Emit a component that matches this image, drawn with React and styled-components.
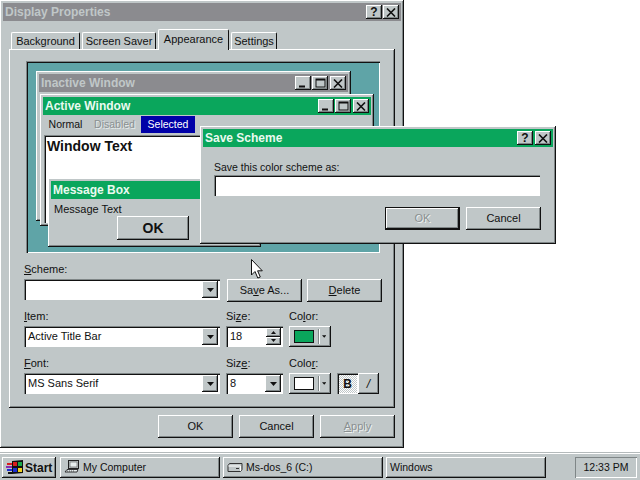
import styled, { createGlobalStyle, css } from "styled-components";

const FACE = "#c0c7c8";
const GREEN = "#0aa65c";

const raised = css`
  box-shadow: inset -1px -1px 0 #111, inset 1px 1px 0 #fff, inset -2px -2px 0 #7f8687;
`;

const sunken = css`
  box-shadow: inset 1px 1px 0 #7f8687, inset 2px 2px 0 #111, inset -1px -1px 0 #fff;
`;

const GlobalStyle = createGlobalStyle`
  html, body {
    margin: 0;
    background: #fff;
  }
  body {
    font-family: "Liberation Sans", Arial, sans-serif;
    font-size: 11px;
    color: #111;
  }
  u {
    text-underline-offset: 1px;
  }
`;

const Desktop = styled.div`
  position: relative;
  width: 640px;
  height: 480px;
  overflow: hidden;
  display: flex;
  flex-direction: column;
  justify-content: space-between;
  background: #fff;
`;

const Window = styled.div`
  box-sizing: border-box;
  width: ${(p) => p.$w}px;
  height: ${(p) => p.$h}px;
  padding: 3px;
  background: ${FACE};
  display: flex;
  flex-direction: column;
  box-shadow: inset -1px -1px 0 #111, inset 1px 1px 0 #fff, inset -2px -2px 0 #7f8687;
`;

const DialogWindow = styled(Window)`
  position: absolute;
  left: 200px;
  top: 126px;
  z-index: 5;
`;

const PreviewWindow = styled(Window)`
  position: absolute;
  left: ${(p) => p.$x}px;
  top: ${(p) => p.$y}px;
`;

const TitleBar = styled.div`
  flex: none;
  height: 18px;
  padding: 0 2px;
  display: flex;
  align-items: center;
  justify-content: space-between;
  background: ${(p) => (p.$active ? GREEN : "#8b8b8f")};
  color: ${(p) => (p.$active ? "#eafaf0" : FACE)};
  font-size: 12px;
  font-weight: bold;
`;

const TitleButtons = styled.div`
  display: flex;
  align-items: center;
  gap: ${(p) => p.$gap ?? 1}px;
`;

const TitleButton = styled.div`
  width: 16px;
  height: 14px;
  margin-left: ${(p) => p.$ml ?? 0}px;
  background: ${FACE};
  color: #111;
  display: flex;
  align-items: center;
  justify-content: center;
  font-size: 12px;
  font-weight: bold;
  ${raised}
`;

const CloseIcon = () => (
  <svg width="10" height="9" viewBox="0 0 10 9">
    <path d="M1 0.5 L9 8.5 M9 0.5 L1 8.5" stroke="#111" strokeWidth="1.6" />
  </svg>
);

const MinIcon = () => (
  <svg width="10" height="10" viewBox="0 0 10 10">
    <rect x="1" y="7.5" width="6" height="2" fill="#111" />
  </svg>
);

const MaxIcon = () => (
  <svg width="11" height="10" viewBox="0 0 11 10">
    <rect x="1" y="1" width="9" height="8" fill="none" stroke="#111" strokeWidth="1" />
    <rect x="1" y="1" width="9" height="1.5" fill="#111" />
  </svg>
);

const TabStrip = styled.div`
  flex: none;
  height: 20px;
  margin-top: 8px;
  padding-left: 8px;
  display: flex;
  align-items: flex-end;
  gap: 2px;
  position: relative;
  z-index: 1;
`;

const Tab = styled.div`
  box-sizing: border-box;
  width: ${(p) => p.$w}px;
  height: ${(p) => (p.$active ? 21 : 17)}px;
  margin-bottom: ${(p) => (p.$active ? -1 : 0)}px;
  padding-top: ${(p) => (p.$active ? 2 : 1)}px;
  background: ${FACE};
  text-align: center;
  white-space: nowrap;
  line-height: 15px;
  border-top: 1px solid #fff;
  border-left: 1px solid #fff;
  border-right: 1px solid #111;
  border-radius: 2px 2px 0 0;
`;

const TabPanel = styled.div`
  box-sizing: border-box;
  width: 386px;
  height: 359px;
  margin-left: 6px;
  padding: 12px 0 0 15px;
  ${raised}
`;

const Preview = styled.div`
  position: relative;
  width: 354px;
  height: 192px;
  margin-left: 2px;
  margin-bottom: 11px;
  background: #5fa4a7;
  box-shadow: inset 1px 1px 0 #7f8687, inset 2px 2px 0 #111, inset -1px -1px 0 #fff;
`;

const MenuRow = styled.div`
  flex: none;
  height: 19px;
  display: flex;
  align-items: center;
  font-size: 10.5px;
`;

const MenuItem = styled.span`
  box-sizing: border-box;
  width: ${(p) => p.$w}px;
  height: 17px;
  line-height: 16px;
  text-align: center;
  ${(p) =>
    p.$disabled &&
    css`
      color: #8a9091;
      text-shadow: 1px 1px 0 #e6ecec;
    `}
  ${(p) =>
    p.$selected &&
    css`
      background: #0000a8;
      color: #fff;
    `}
`;

const WindowTextBox = styled.div`
  flex: 1;
  margin: 1px 0 0 1px;
  padding: 3px 3px;
  background: #fff;
  font-size: 14px;
  font-weight: bold;
  color: #111;
  ${sunken}
`;

const MessageBody = styled.div`
  flex: 1;
  display: flex;
  flex-direction: column;
  padding: 4px 0 0 3px;
`;

const BigButton = styled.div`
  box-sizing: border-box;
  width: 72px;
  height: 24px;
  margin: 1px 0 0 63px;
  display: flex;
  align-items: center;
  justify-content: center;
  font-size: 14px;
  font-weight: bold;
  ${raised}
`;

const DialogBody = styled.div`
  flex: 1;
  display: flex;
  flex-direction: column;
  padding: 15px 12px 0 11px;
`;

const Label = styled.div`
  height: 13px;
  margin-bottom: ${(p) => p.$mb ?? 2}px;
  font-size: ${(p) => p.$size ?? 11}px;
  line-height: 11px;
`;

const TextInput = styled.div`
  width: 326px;
  height: 21px;
  background: #fff;
  ${sunken}
`;

const ButtonRow = styled.div`
  display: flex;
  justify-content: flex-end;
  gap: ${(p) => p.$gap ?? 6}px;
  margin-top: ${(p) => p.$mt ?? 0}px;
  margin-right: ${(p) => p.$mr ?? 0}px;
`;

const Button = styled.div`
  box-sizing: border-box;
  width: 75px;
  height: 23px;
  padding-bottom: 2px;
  display: flex;
  align-items: center;
  justify-content: center;
  ${raised}
  ${(p) =>
    p.$disabled &&
    css`
      color: #8a9091;
      text-shadow: 1px 1px 0 #eef2f2;
    `}
  ${(p) =>
    p.$default &&
    css`
      box-shadow: inset 0 0 0 1px #111, inset -2px -2px 0 #111, inset 2px 2px 0 #fff, inset -3px -3px 0 #7f8687;
    `}
`;

const FormRow = styled.div`
  display: flex;
  align-items: flex-start;
  gap: 6px;
  margin-bottom: ${(p) => p.$mb ?? 0}px;
`;

const Field = styled.div`
  width: ${(p) => p.$w}px;
`;

const ComboBox = styled.div`
  box-sizing: border-box;
  width: ${(p) => p.$w}px;
  height: 21px;
  padding: 2px 2px 2px 4px;
  background: #fff;
  display: flex;
  align-items: center;
  justify-content: space-between;
  ${sunken}
`;

const ComboText = styled.span`
  margin-bottom: 2px;
`;

const DropButton = styled.div`
  flex: none;
  width: 16px;
  height: 17px;
  background: ${FACE};
  display: flex;
  align-items: center;
  justify-content: center;
  ${raised}
`;

const DownArrow = ({ w = 7 }) => (
  <svg width={w} height={Math.ceil(w / 2)} viewBox={`0 0 ${w} ${Math.ceil(w / 2)}`}>
    <path d={`M0 0 H${w} L${w / 2} ${Math.ceil(w / 2)} Z`} fill="#111" />
  </svg>
);

const Spinner = styled.div`
  flex: none;
  width: 15px;
  height: 17px;
  display: flex;
  flex-direction: column;
`;

const SpinPart = styled.div`
  flex: 1;
  background: ${FACE};
  display: flex;
  align-items: center;
  justify-content: center;
  ${raised}
  svg {
    transform: ${(p) => (p.$up ? "rotate(180deg)" : "none")};
  }
`;

const ColorButton = styled.div`
  box-sizing: border-box;
  width: 42px;
  height: 21px;
  padding: 4px 5px 4px 5px;
  display: flex;
  align-items: center;
  ${raised}
`;

const Swatch = styled.div`
  box-sizing: border-box;
  width: 22px;
  height: 13px;
  background: ${(p) => p.$color};
  border: 1px solid #111;
`;

const ColorDivider = styled.div`
  width: 1px;
  height: 15px;
  margin: 0 3px 0 4px;
  background: #7f8687;
  box-shadow: 1px 0 0 #fff;
`;

const StyleToggles = styled.div`
  display: flex;
`;

const StyleButton = styled.div`
  box-sizing: border-box;
  width: 21px;
  height: 21px;
  display: flex;
  align-items: center;
  justify-content: center;
  font-size: 12px;
  font-weight: ${(p) => (p.$italic ? "normal" : "bold")};
  font-style: ${(p) => (p.$italic ? "italic" : "normal")};
  ${(p) =>
    p.$pressed
      ? css`
          background: repeating-conic-gradient(#fff 0 25%, ${FACE} 0 50%) 0 0 / 2px 2px;
          ${sunken}
        `
      : raised}
`;

const Taskbar = styled.div`
  flex: none;
  box-sizing: border-box;
  height: 28px;
  padding: 4px 3px 3px 2px;
  display: flex;
  align-items: flex-start;
  background: ${FACE};
  border-top: 1px solid #b4babb;
  box-shadow: inset 0 1px 0 #fff;
`;

const StartButton = styled.div`
  box-sizing: border-box;
  width: 54px;
  height: 21px;
  margin-right: 4px;
  padding-left: 4px;
  display: flex;
  align-items: center;
  gap: 1px;
  font-size: 12px;
  font-weight: bold;
  ${raised}
`;

const TaskButton = styled.div`
  box-sizing: border-box;
  width: 160px;
  height: 21px;
  margin-right: 3px;
  padding: 0 0 1px 4px;
  display: flex;
  align-items: center;
  gap: 3px;
  font-size: 10.5px;
  ${raised}
`;

const Clock = styled.div`
  box-sizing: border-box;
  width: 62px;
  height: 21px;
  margin-left: auto;
  padding-bottom: 1px;
  display: flex;
  align-items: center;
  justify-content: center;
  font-size: 10.5px;
  box-shadow: inset 1px 1px 0 #7f8687, inset -1px -1px 0 #fff;
`;

const Cursor = styled.svg`
  position: absolute;
  left: 251px;
  top: 259px;
  z-index: 10;
`;

const FlagIcon = () => (
  <svg width="18" height="17" viewBox="0 0 18 17">
    <path d="M6 2 L17 1 L17 14 L6 15 Z" fill="#111" />
    <rect x="7" y="3" width="4" height="4" fill="#d81e1e" />
    <rect x="12" y="3" width="4" height="4" fill="#17a84a" />
    <rect x="7" y="9" width="4" height="4" fill="#1c2fd0" />
    <rect x="12" y="9" width="4" height="4" fill="#f2d21e" />
    <rect x="1" y="4" width="5" height="2" fill="#d81e1e" />
    <rect x="0" y="7" width="6" height="2" fill="#8a2bb0" />
    <rect x="1" y="10" width="5" height="2" fill="#1c2fd0" />
    <rect x="2" y="13" width="4" height="2" fill="#111" />
  </svg>
);

const ComputerIcon = () => (
  <svg width="16" height="16" viewBox="0 0 16 16">
    <rect x="4.5" y="1.5" width="10" height="8" fill={FACE} stroke="#222" />
    <rect x="6" y="3" width="7" height="5" fill="#e8eeee" stroke="#555" strokeWidth="0.6" />
    <path d="M3 10.5 H14 L13 13 H1 Z" fill="#e8eeee" stroke="#222" strokeWidth="0.9" />
    <path d="M3 12 H11" stroke="#333" strokeWidth="0.8" strokeDasharray="1 1" />
  </svg>
);

const DriveIcon = () => (
  <svg width="16" height="12" viewBox="0 0 16 12">
    <path d="M2.5 2.5 H15 V8.5 L13.5 10.5 H1 V4.5 Z" fill={FACE} stroke="#333" />
    <path d="M1.5 5 H13.5 V10" fill="none" stroke="#fff" />
    <path d="M9 7.5 H12" stroke="#333" />
  </svg>
);

const App = () => (
  <Desktop>
    <GlobalStyle />
    <Window $w={404} $h={448}>
      <TitleBar>
        <span>Display Properties</span>
        <TitleButtons>
          <TitleButton>?</TitleButton>
          <TitleButton>
            <CloseIcon />
          </TitleButton>
        </TitleButtons>
      </TitleBar>
      <TabStrip>
        <Tab $w={69}>Background</Tab>
        <Tab $w={74}>Screen Saver</Tab>
        <Tab $w={71} $active>
          Appearance
        </Tab>
        <Tab $w={46}>Settings</Tab>
      </TabStrip>
      <TabPanel>
        <Preview>
          <PreviewWindow $x={10} $y={10} $w={315} $h={150}>
            <TitleBar>
              <span>Inactive Window</span>
              <TitleButtons>
                <TitleButton>
                  <MinIcon />
                </TitleButton>
                <TitleButton>
                  <MaxIcon />
                </TitleButton>
                <TitleButton $ml={1}>
                  <CloseIcon />
                </TitleButton>
              </TitleButtons>
            </TitleBar>
          </PreviewWindow>
          <PreviewWindow $x={14} $y={33} $w={334} $h={132}>
            <TitleBar $active>
              <span>Active Window</span>
              <TitleButtons>
                <TitleButton>
                  <MinIcon />
                </TitleButton>
                <TitleButton>
                  <MaxIcon />
                </TitleButton>
                <TitleButton $ml={1}>
                  <CloseIcon />
                </TitleButton>
              </TitleButtons>
            </TitleBar>
            <MenuRow>
              <MenuItem $w={45}>Normal</MenuItem>
              <MenuItem $w={53} $disabled>
                Disabled
              </MenuItem>
              <MenuItem $w={54} $selected>
                Selected
              </MenuItem>
            </MenuRow>
            <WindowTextBox>Window Text</WindowTextBox>
          </PreviewWindow>
          <PreviewWindow $x={22} $y={117} $w={213} $h={69}>
            <TitleBar $active>
              <span>Message Box</span>
            </TitleBar>
            <MessageBody>
              <span>Message Text</span>
              <BigButton>OK</BigButton>
            </MessageBody>
          </PreviewWindow>
        </Preview>

        <FormRow $mb={9}>
          <Field $w={196}>
            <Label>
              <u>S</u>cheme:
            </Label>
            <ComboBox $w={196}>
              <span />
              <DropButton>
                <DownArrow />
              </DropButton>
            </ComboBox>
          </Field>
          <Field $w={156}>
            <Label />
            <ButtonRow $gap={5}>
              <Button>
                <span>
                  Sa<u>v</u>e As...
                </span>
              </Button>
              <Button>
                <span>
                  <u>D</u>elete
                </span>
              </Button>
            </ButtonRow>
          </Field>
        </FormRow>

        <FormRow $mb={11}>
          <Field $w={196}>
            <Label>
              <u>I</u>tem:
            </Label>
            <ComboBox $w={196}>
              <ComboText>Active Title Bar</ComboText>
              <DropButton>
                <DownArrow />
              </DropButton>
            </ComboBox>
          </Field>
          <Field $w={57}>
            <Label>
              Si<u>z</u>e:
            </Label>
            <ComboBox $w={57}>
              <ComboText>18</ComboText>
              <Spinner>
                <SpinPart $up>
                  <DownArrow w={5} />
                </SpinPart>
                <SpinPart>
                  <DownArrow w={5} />
                </SpinPart>
              </Spinner>
            </ComboBox>
          </Field>
          <Field $w={42}>
            <Label>
              Co<u>l</u>or:
            </Label>
            <ColorButton>
              <Swatch $color={GREEN} />
              <ColorDivider />
              <DownArrow w={5} />
            </ColorButton>
          </Field>
        </FormRow>

        <FormRow>
          <Field $w={196}>
            <Label>
              <u>F</u>ont:
            </Label>
            <ComboBox $w={196}>
              <ComboText>MS Sans Serif</ComboText>
              <DropButton>
                <DownArrow />
              </DropButton>
            </ComboBox>
          </Field>
          <Field $w={57}>
            <Label>
              Siz<u>e</u>:
            </Label>
            <ComboBox $w={57}>
              <ComboText>8</ComboText>
              <DropButton>
                <DownArrow />
              </DropButton>
            </ComboBox>
          </Field>
          <Field $w={42}>
            <Label>
              Colo<u>r</u>:
            </Label>
            <ColorButton>
              <Swatch $color="#fff" />
              <ColorDivider />
              <DownArrow w={5} />
            </ColorButton>
          </Field>
          <Field $w={42}>
            <Label />
            <StyleToggles>
              <StyleButton $pressed>B</StyleButton>
              <StyleButton $italic>/</StyleButton>
            </StyleToggles>
          </Field>
        </FormRow>
      </TabPanel>
      <ButtonRow $mt={7} $mr={6}>
        <Button>OK</Button>
        <Button>Cancel</Button>
        <Button $disabled>
          <span>
            <u>A</u>pply
          </span>
        </Button>
      </ButtonRow>
    </Window>

    <DialogWindow $w={356} $h={118}>
      <TitleBar $active>
        <span>Save Scheme</span>
        <TitleButtons $gap={2}>
          <TitleButton>?</TitleButton>
          <TitleButton>
            <CloseIcon />
          </TitleButton>
        </TitleButtons>
      </TitleBar>
      <DialogBody>
        <Label $mb={0} $size={10.5}>
          Save this color scheme as:
        </Label>
        <TextInput />
        <ButtonRow $mt={11}>
          <Button $disabled $default>
            OK
          </Button>
          <Button>Cancel</Button>
        </ButtonRow>
      </DialogBody>
    </DialogWindow>

    <Cursor width="12" height="20" viewBox="0 0 12 20">
      <path d="M0.5 0.5 V16 L4 12.5 L6.8 19 L9.3 18 L6.6 11.8 H11.3 Z" fill="#fff" stroke="#111" strokeWidth="1" />
    </Cursor>

    <Taskbar>
      <StartButton>
        <FlagIcon />
        Start
      </StartButton>
      <TaskButton>
        <ComputerIcon />
        My Computer
      </TaskButton>
      <TaskButton>
        <DriveIcon />
        Ms-dos_6 (C:)
      </TaskButton>
      <TaskButton>Windows</TaskButton>
      <Clock>12:33 PM</Clock>
    </Taskbar>
  </Desktop>
);

export default App;
